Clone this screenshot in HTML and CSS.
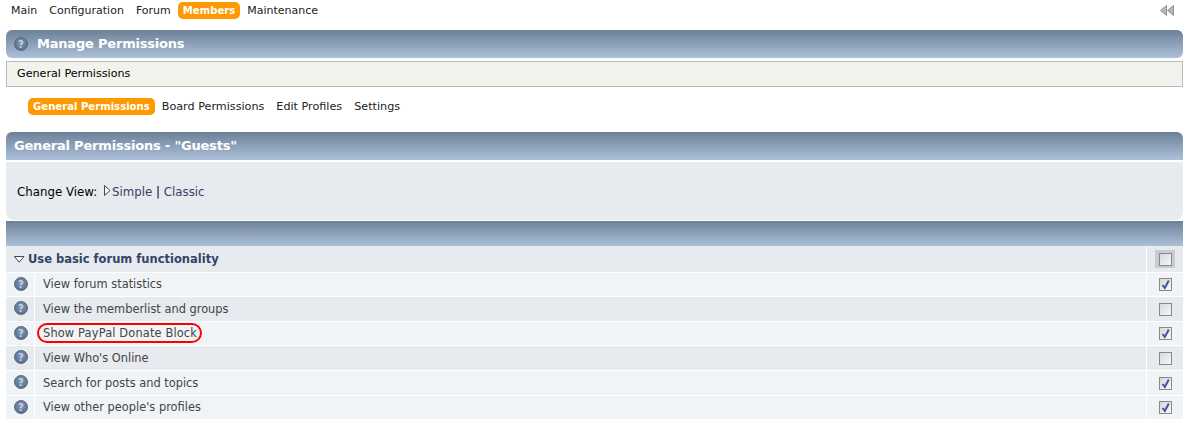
FILE: index.html
```html
<!DOCTYPE html>
<html lang="en">
<head>
  <meta charset="UTF-8">
  <title>Manage Permissions</title>
  <link rel="stylesheet" href="styles.css">
</head>
<body>
  <nav class="menu">
    <div class="menu-items">
      <a class="menu-item">Main</a>
      <a class="menu-item">Configuration</a>
      <a class="menu-item">Forum</a>
      <a class="menu-item active">Members</a>
      <a class="menu-item">Maintenance</a>
    </div>
    <svg class="collapse" width="14" height="11" viewBox="0 0 14 11">
      <path d="M6.5 0.5V10.5L0.5 5.5Z M13.5 0.5V10.5L7.5 5.5Z" fill="#b4b9bd" stroke="#8c9296" stroke-width="1"/>
    </svg>
  </nav>

  <div class="title-bar large">
    <span class="help"><span>?</span></span>
    <h1>Manage Permissions</h1>
  </div>
  <div class="description">General Permissions</div>

  <div class="subtabs">
    <a class="subtab active">General Permissions</a>
    <a class="subtab">Board Permissions</a>
    <a class="subtab">Edit Profiles</a>
    <a class="subtab">Settings</a>
  </div>

  <div class="title-bar rounded-top section-title">
    <h2>General Permissions - "Guests"</h2>
  </div>
  <div class="window">
    Change View: <svg class="view-arrow" width="7" height="11" viewBox="0 0 7 11"><path d="M0.5 0.5L6 5.5L0.5 10.5Z" fill="#fff" stroke="#444"/></svg><a class="link">Simple</a> | <a class="link">Classic</a>
  </div>

  <div class="title-bar blank"></div>

  <div class="permissions">
    <div class="group-row">
      <div class="group-name">
        <svg width="11" height="7" viewBox="0 0 11 7"><path d="M0.5 0.5H10L5.2 6.2Z" fill="#fff" stroke="#445"/></svg>
        <strong>Use basic forum functionality</strong>
      </div>
      <div class="check-cell"><span class="group-check"><span class="check"></span></span></div>
    </div>

    <div class="row odd short">
      <div class="help-cell"><span class="help"><span>?</span></span></div>
      <div class="name-cell">View forum statistics</div>
      <div class="check-cell"><span class="check checked"><svg width="11" height="11" viewBox="0 0 11 11"><path d="M2.5 6L4.8 9L8.8 1.5" fill="none" stroke="#3c55a5" stroke-width="2"/></svg></span></div>
    </div>
    <div class="row even">
      <div class="help-cell"><span class="help"><span>?</span></span></div>
      <div class="name-cell">View the memberlist and groups</div>
      <div class="check-cell"><span class="check"></span></div>
    </div>
    <div class="row odd short">
      <div class="help-cell"><span class="help"><span>?</span></span></div>
      <div class="name-cell"><span class="circled">Show PayPal Donate Block</span></div>
      <div class="check-cell"><span class="check checked"><svg width="11" height="11" viewBox="0 0 11 11"><path d="M2.5 6L4.8 9L8.8 1.5" fill="none" stroke="#3c55a5" stroke-width="2"/></svg></span></div>
    </div>
    <div class="row even">
      <div class="help-cell"><span class="help"><span>?</span></span></div>
      <div class="name-cell">View Who's Online</div>
      <div class="check-cell"><span class="check"></span></div>
    </div>
    <div class="row odd">
      <div class="help-cell"><span class="help"><span>?</span></span></div>
      <div class="name-cell">Search for posts and topics</div>
      <div class="check-cell"><span class="check checked"><svg width="11" height="11" viewBox="0 0 11 11"><path d="M2.5 6L4.8 9L8.8 1.5" fill="none" stroke="#3c55a5" stroke-width="2"/></svg></span></div>
    </div>
    <div class="row odd short">
      <div class="help-cell"><span class="help"><span>?</span></span></div>
      <div class="name-cell">View other people's profiles</div>
      <div class="check-cell"><span class="check checked"><svg width="11" height="11" viewBox="0 0 11 11"><path d="M2.5 6L4.8 9L8.8 1.5" fill="none" stroke="#3c55a5" stroke-width="2"/></svg></span></div>
    </div>
  </div>
</body>
</html>
```

FILE: styles.css
```css
body {
  font-family: "DejaVu Sans", Verdana, sans-serif;
  font-size: 11px;
  color: #000;
  background-color: #fff;
  margin: 0;
  padding: 0 6px;
  overflow: hidden;
}

.menu {
  display: flex;
  justify-content: space-between;
  align-items: center;
  height: 30px;
  padding-bottom: 9px;
  box-sizing: border-box;
}

.menu-items {
  display: flex;
  align-items: center;
  gap: 2px;
}

.menu-item {
  padding: 2px 5px;
  line-height: 13px;
  color: #222;
  border-radius: 5px;
}

.menu-item.active,
.subtab.active {
  background-color: #ff9900;
  color: #fff;
  font-size: 10.1px;
  font-weight: bold;
}

.collapse {
  margin-right: 9px;
}

.title-bar {
  display: flex;
  align-items: center;
  background: linear-gradient(#6c8097, #adc0d9);
  color: #fff;
}

.rounded-top {
  border-radius: 6px 6px 0 0;
}

.title-bar.large {
  height: 28px;
  padding-left: 8px;
  gap: 9px;
  border-radius: 6px;
}

.title-bar h1,
.title-bar h2 {
  margin: 0 0 2px;
  font-size: 13px;
  letter-spacing: -0.2px;
  font-weight: bold;
}

.section-title {
  height: 28px;
  padding-left: 8px;
}

.blank {
  height: 25px;
  margin-top: 1px;
}

.help {
  display: inline-flex;
  align-items: center;
  justify-content: center;
  width: 14px;
  height: 14px;
  box-sizing: border-box;
  border-radius: 50%;
  background: radial-gradient(circle at 50% 40%, #8198b8, #4f6482);
  border: 1px solid #56677e;
  color: #c9d2de;
  font-size: 10px;
  font-weight: bold;
}

.description {
  margin-top: 3px;
  height: 26px;
  box-sizing: border-box;
  padding-left: 10px;
  line-height: 24px;
  font-size: 11.15px;
  background-color: #f3f3ee;
  border: 1px solid #bbb;
}

.subtabs {
  display: flex;
  align-items: center;
  gap: 2px;
  height: 17px;
  margin: 11px 0 17px 22px;
  font-size: 11.2px;
}

.subtab {
  padding: 2px 5px;
  line-height: 13px;
  color: #222;
  border-radius: 5px;
}

.window {
  margin-top: 2px;
  height: 58px;
  box-sizing: border-box;
  padding: 23px 11px 0;
  font-size: 11.8px;
  line-height: 15px;
  background-color: #e7eaef;
  border-radius: 0 0 8px 8px;
}

.view-arrow {
  margin: 0 1px 0 3px;
}

.link {
  color: #334466;
}

.permissions {
  display: flex;
  flex-direction: column;
  gap: 1px;
}

.group-row,
.row {
  display: flex;
  gap: 1px;
}

.group-row {
  height: 26px;
  background-color: #e7eaef;
  gap: 0;
}

.group-name {
  flex: 1;
  display: flex;
  align-items: center;
  gap: 3px;
  padding-left: 8px;
  font-size: 11.5px;
  color: #334466;
}

.group-row .check-cell {
  border-left: 1px solid #fff;
  width: 37px;
}

.row {
  height: 24px;
}

.row.short {
  height: 23px;
}

.odd > div {
  background-color: #f0f4f7;
}

.even > div {
  background-color: #e7eaef;
}

.help-cell {
  width: 28px;
  display: flex;
  justify-content: center;
  padding: 4px 0 0 2px;
  box-sizing: border-box;
}

.name-cell {
  flex: 1;
  display: flex;
  align-items: center;
  padding: 0 0 1px 8px;
  font-size: 11.4px;
  color: #444;
}

.check-cell {
  width: 36px;
  display: flex;
  align-items: center;
  justify-content: center;
  box-sizing: border-box;
}

.check {
  display: inline-flex;
  align-items: center;
  justify-content: center;
  width: 13px;
  height: 13px;
  box-sizing: border-box;
  border: 1px solid #888;
  background: linear-gradient(135deg, #d8d8d8, #f8f8f8);
}

.group-check {
  display: inline-flex;
  align-items: center;
  justify-content: center;
  width: 20px;
  height: 18px;
  background-color: #c8ccd2;
}

.circled {
  position: relative;
  letter-spacing: 0.15px;
}

.circled::after {
  content: "";
  position: absolute;
  top: -3px;
  bottom: -3px;
  left: -6px;
  right: -5px;
  border: 2px solid #f00;
  border-radius: 10px;
}
```
